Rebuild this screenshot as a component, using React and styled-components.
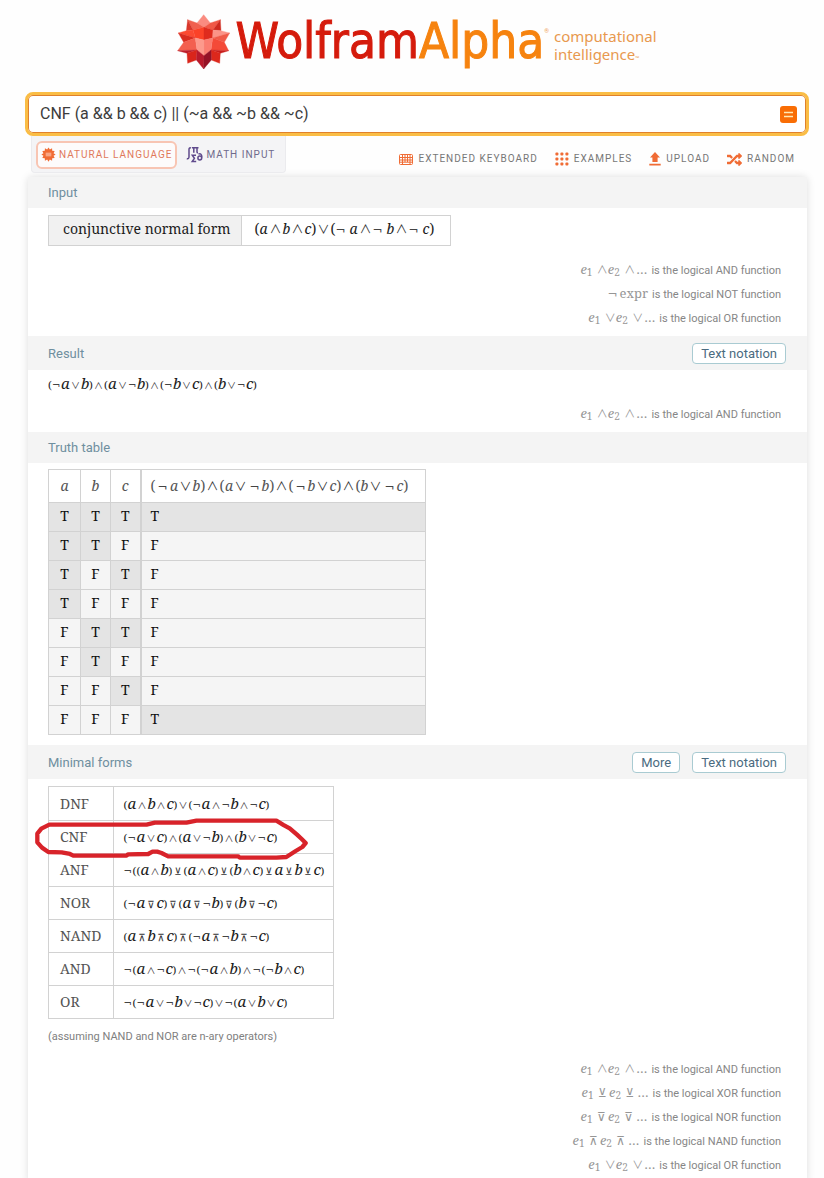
import React from "react";
import styled, { createGlobalStyle, css } from "styled-components";
import { FaRandom } from "react-icons/fa";

const SANS = `Roboto, "Liberation Sans", sans-serif`;
const SERIF = `"Noto Serif", "DejaVu Serif Condensed", "DejaVu Serif", serif`;
const SYMBOL = `"DejaVu Sans", sans-serif`;
const WEDGE = `"Noto Sans CJK SC", "DejaVu Sans", sans-serif`;

const GlobalStyle = createGlobalStyle`
  * { box-sizing: border-box; }
  body {
    margin: 0;
    background: #fefefe;
    color: #333;
    font-family: ${SANS};
    font-size: 13px;
  }
  button { font-family: inherit; cursor: pointer; }
`;

const Page = styled.div`
  padding: 0 17px 0 27px;
  overflow: hidden;
`;

/* ---------- masthead ---------- */

const Masthead = styled.header`
  display: flex;
  justify-content: center;
  align-items: flex-start;
  height: 92px;
  padding-top: 13px;
`;

const HomeLink = styled.a`
  display: flex;
  align-items: center;
  text-decoration: none;
`;

const Spikey = styled.svg`
  width: 54px;
  height: 56px;
  margin-right: 4px;
`;

const Wordmark = styled.span`
  font-family: "DejaVu Sans Condensed", "DejaVu Sans", sans-serif;
  font-size: 49px;
  line-height: 58px;
  color: #d51b0c;
  -webkit-text-stroke: 1px currentColor;
`;

const WordmarkAccent = styled.span`
  color: #f6830f;
`;

const Registered = styled.sup`
  align-self: flex-start;
  font-size: 6px;
  line-height: 8px;
  margin-top: 14px;
  color: #f0a35c;
`;

const Tagline = styled.span`
  margin: 9px 0 0 5px;
  font-family: "Noto Sans", sans-serif;
  font-size: 15px;
  line-height: 18px;
  color: #e8994f;
`;

const Trade = styled.small`
  font-size: 5px;
`;

/* ---------- search ---------- */

const SearchForm = styled.form`
  display: flex;
  align-items: center;
  height: 44px;
  margin: 0 -2px;
  padding: 0 9px 0 12px;
  background: #fff;
  border: 3px solid #fabd45;
  border-radius: 8px;
  box-shadow: inset 0 0 0 1px #e0812c;
`;

const Query = styled.input`
  flex: 1;
  min-width: 0;
  border: 0;
  padding: 0 0 1px;
  outline: 0;
  background: none;
  font: 16px ${SANS};
  color: #3c3c3c;
`;

const Submit = styled.button`
  display: grid;
  place-items: center;
  width: 17px;
  height: 17px;
  padding: 0;
  border: 0;
  border-radius: 3px;
  background: #f96d05;
`;

/* ---------- toolbar ---------- */

const Toolbar = styled.div`
  display: flex;
  justify-content: space-between;
  align-items: flex-start;
  height: 41px;
  padding: 0 12px 0 4px;
`;

const Modes = styled.div`
  display: flex;
  align-items: center;
  height: 37px;
  padding: 1px 4px 0 4px;
  background: #f4f4f6;
  border: 1px solid #ebebee;
  border-top: 0;
  border-radius: 0 0 4px 4px;
`;

const ToolButton = styled.button`
  display: flex;
  align-items: center;
  gap: 5px;
  padding: 0;
  border: 0;
  background: none;
  font-size: 10px;
  line-height: 16px;
  letter-spacing: 1px;
  text-transform: uppercase;
  white-space: nowrap;
  color: #777;
  svg { flex: none; color: #f06c35; }
`;

const ModeButton = styled(ToolButton)`
  height: 28px;
  gap: 3px;
  padding: 0 4px;
  border: 2px solid transparent;
  border-radius: 6px;
  color: #6f6a8c;
  ${(p) =>
    p.$active &&
    css`
      margin-right: 3px;
      padding: 0 3px;
      border-color: #f8c5b3;
      background: #fdfbfb;
      color: #e0795a;
    `}
`;

const Tools = styled.div`
  display: flex;
  gap: 17px;
  padding-top: 15px;
`;

/* ---------- result pods ---------- */

const Card = styled.main`
  margin: 0 0 0 1px;
  background: #fff;
  border-radius: 4px 4px 0 0;
  box-shadow: 0 0 9px rgba(0, 0, 0, 0.13);
`;

const PodHeader = styled.div`
  display: flex;
  align-items: center;
  gap: 12px;
  height: ${(p) => (p.$tall ? 34 : 31)}px;
  padding: 0 21px 0 20px;
  background: #f4f4f4;
`;

const PodTitle = styled.h2`
  flex: 1;
  margin: 0;
  font-size: 13px;
  font-weight: 400;
  color: #6f8f9f;
`;

const PodButton = styled.button`
  height: 21px;
  padding: 0 8px;
  border: 1px solid #a9cbd2;
  border-radius: 4px;
  background: #fff;
  font-size: 13px;
  line-height: 19px;
  color: #4b6b80;
`;

const PodBody = styled.div`
  display: flex;
  flex-direction: column;
  align-items: flex-start;
  padding: 6px 26px 7px 20px;
`;

const Notes = styled.ul`
  align-self: stretch;
  margin: 11px 0 0;
  padding: 0;
  list-style: none;
`;

const Note = styled.li`
  display: flex;
  justify-content: flex-end;
  align-items: baseline;
  gap: 4px;
  height: 24px;
  font-size: 11px;
  line-height: 24px;
  color: #868686;
`;

const Remark = styled.p`
  margin: 10px 0 0;
  font-size: 11px;
  line-height: 16px;
  color: #808080;
`;

/* ---------- formulas ---------- */

const sizes = {
  text: { letter: 14, paren: 14, wedge: 12, sign: 12, pw: 5, nw: 14, ow: 14 },
  small: { letter: 15, paren: 11, wedge: 9, sign: 10, pw: 4, nw: 9, ow: 11 },
};

const Math = styled.span`
  display: inline-flex;
  align-items: baseline;
  height: 14px;
  font-family: ${SERIF};
  line-height: 14px;
  color: ${(p) => (p.$muted ? "#555" : "#1c1c1c")};
`;

const Letter = styled.i`
  width: ${(p) => ({ a: 9, b: 8, c: 7 })[p.children]}px;
  font-size: ${(p) => sizes[p.$size].letter}px;
`;

const Paren = styled.span`
  width: ${(p) => sizes[p.$size].pw}px;
  font-size: ${(p) => sizes[p.$size].paren}px;
`;

const Not = styled.span`
  width: ${(p) => sizes[p.$size].nw}px;
  font-family: ${SYMBOL};
  font-size: ${(p) => sizes[p.$size].sign}px;
  color: #444;
`;

const Sign = styled.span`
  display: flex;
  justify-content: center;
  width: ${(p) => sizes[p.$size].ow}px;
  font-family: ${(p) => (p.$wedge ? WEDGE : SYMBOL)};
  font-size: ${(p) => (p.$wedge ? sizes[p.$size].wedge : sizes[p.$size].sign)}px;
  color: #333;
`;

const isWedge = (ch) => ch === "∧" || ch === "∨";

function Formula({ children, size = "small", muted }) {
  return (
    <Math $muted={muted}>
      {[...children].map((ch, i) => {
        if ("abc".includes(ch)) return <Letter key={i} $size={size}>{ch}</Letter>;
        if ("()".includes(ch)) return <Paren key={i} $size={size}>{ch}</Paren>;
        if (ch === "¬") return <Not key={i} $size={size}>{ch}</Not>;
        return <Sign key={i} $size={size} $wedge={isWedge(ch)}>{ch}</Sign>;
      })}
    </Math>
  );
}

const Pattern = styled.span`
  display: inline-flex;
  align-items: baseline;
  font-family: ${SERIF};
  font-size: 13px;
  color: #969696;
`;

const Sub = styled.sub`
  width: 10px;
  font-size: 10px;
  line-height: 10px;
  vertical-align: baseline;
  position: relative;
  top: 2px;
`;

const PatternSign = styled.span`
  width: ${(p) => (p.$wide ? 12 : 11)}px;
  font-family: ${(p) => (p.$wedge ? WEDGE : SYMBOL)};
  font-size: ${(p) => (p.$wedge ? 11 : 12)}px;
`;

function Definition({ op, name }) {
  return (
    <Note>
      {op === "¬" ? (
        <Pattern>
          <PatternSign $wide>¬</PatternSign>expr
        </Pattern>
      ) : (
        <Pattern>
          <i>e</i><Sub>1</Sub><PatternSign $wedge={isWedge(op)}>{op}</PatternSign>
          <i>e</i><Sub>2</Sub><PatternSign $wide $wedge={isWedge(op)}>{op}</PatternSign>…
        </Pattern>
      )}
      <span>is the logical {name} function</span>
    </Note>
  );
}

/* ---------- tables ---------- */

const Grid = styled.table`
  border-collapse: collapse;
  font-family: ${SERIF};
  font-size: 14px;
  line-height: 16px;
  th, td {
    border: 1px solid #d2d2d2;
    padding: 0;
    font-weight: 400;
    text-align: left;
  }
`;

const InputGrid = styled(Grid)`
  margin-top: 1px;
  color: #1c1c1c;
  tr { height: 30px; }
  th { padding: 0 10px 4px 14px; background: #f1f1f1; }
  td { padding: 0 15px 4px 13px; }
`;

const TruthGrid = styled(Grid)`
  margin-bottom: 3px;
  tr { height: 29px; }
  thead tr { height: 33px; }
  thead th { width: 30px; text-align: center; color: #555; }
  thead th:first-child { width: 32px; }
  thead th:last-child {
    width: auto;
    padding: 0 16px 0 9px;
    border-left-width: 2px;
  }
`;

const TruthCell = styled.td`
  && {
    padding: 0 0 3px;
    text-align: center;
    color: #111;
    background: ${(p) => (p.$on ? "#e4e4e4" : "#f5f5f5")};
  }
  &&:last-child {
    padding-left: 9px;
    text-align: left;
    border-left-width: 2px;
  }
`;

const FormsWrap = styled.div`
  position: relative;
  margin-top: 1px;
`;

const FormsGrid = styled(Grid)`
  tr { height: 33px; }
  tr:first-child { height: 34px; }
  th { padding: 0 12px 0 11px; color: #555; }
  td { padding: 0 9px; }
`;

const Scribble = styled.svg`
  position: absolute;
  left: -13px;
  top: 32px;
  width: 273px;
  height: 42px;
  pointer-events: none;
`;

/* ---------- drawings ---------- */

const FACES = [
  ["130,42 150,67 131,80 110,67", "#fa8b80"],
  ["180,57 150,67 131,80 158,88", "#f05846"],
  ["180,57 158,88 182,90", "#cf2a1f"],
  ["82,57 110,67 131,80 98,88", "#f0604f"],
  ["82,57 98,88 78,90", "#d9372b"],
  ["131,80 98,88 105,112 131,118", "#fb4228"],
  ["131,80 158,88 157,112 131,118", "#df2b1e"],
  ["54,97 78,90 98,88 105,112", "#fb4a32"],
  ["54,97 105,112 70,125", "#d92c20"],
  ["208,97 182,90 158,88 157,112", "#fb9388"],
  ["208,97 157,112 192,125", "#f05a49"],
  ["52,150 70,125 105,112 110,148", "#f3604f"],
  ["52,150 110,148 80,158", "#bd1d2b"],
  ["205,150 192,125 157,112 152,148", "#f44a38"],
  ["205,150 152,148 180,158", "#c81d1b"],
  ["131,118 157,112 152,148 131,165", "#fb7d70"],
  ["131,118 105,112 110,148 131,165", "#fd9a8c"],
  ["82,188 80,158 110,148 108,178", "#d9251b"],
  ["178,188 180,158 152,148 153,178", "#dc281c"],
  ["130,205 108,178 110,148 131,165", "#b81a2c"],
  ["130,205 153,178 152,148 131,165", "#951226"],
];

const burst = Array.from({ length: 24 }, (_, i) => {
  const r = i % 2 ? 5.6 : 7.6;
  const t = (i * globalThis.Math.PI) / 12;
  return `${(8 + r * globalThis.Math.cos(t)).toFixed(2)},${(8 + r * globalThis.Math.sin(t)).toFixed(2)}`;
}).join(" ");

const BurstIcon = () => (
  <svg width="15" height="15" viewBox="0 0 16 16" fill="currentColor">
    <polygon points={burst} />
    <rect x="5" y="6" width="6" height="4" fill="#f8a583" />
  </svg>
);

const MathIcon = () => (
  <svg width="17" height="17" viewBox="0 0 17 17" fill="none" stroke="#5f4a8c" strokeWidth="1.5">
    <path d="M5 2.2C3.6 1.4 3 2.2 3 3.6v7.2c0 1.600-.8 2.400-2.200 1.700" />
    <path d="M6 1.800h6.500M7.800 1.800v5M11 1.800v4.200q0 .8 1 .8" />
    <path d="M10 9.300H6.300L8.400 12.300 6.200 15.500H10.200" />
    <path d="M12.400 8.200C14.400 7 16 8.400 15.800 11.400" />
    <circle cx="13.800" cy="12" r="1.900" />
  </svg>
);

const KeyboardIcon = () => (
  <svg width="14" height="11" viewBox="0 0 14 11" fill="none" stroke="currentColor">
    <rect x=".5" y=".5" width="13" height="10" rx="1" />
    <path d="M1 3.5h12M1 6h12M1 8.2h12M3.5 1v9M6 1v7M8.5 1v7M11 1v9" />
  </svg>
);

const DotsIcon = () => (
  <svg width="14" height="14" viewBox="0 0 14 14" fill="currentColor">
    {[0, 5, 10].map((y) =>
      [0, 5, 10].map((x) => <rect key={`${x}-${y}`} x={x + 0.4} y={y + 0.4} width="3" height="3" rx="1" />)
    )}
  </svg>
);

const UploadIcon = () => (
  <svg width="12" height="14" viewBox="0 0 12 14" fill="currentColor">
    <path d="M6 0l5 5.4H8.6V10H3.4V5.4H1zM.3 11.8h11.4v1.700H.3z" />
  </svg>
);

const EqualsIcon = () => (
  <svg width="9" height="7" viewBox="0 0 9 7" stroke="#ffe9b5" strokeWidth="1.6">
    <path d="M0 1.5h9M0 5.5h9" />
  </svg>
);

/* ---------- content ---------- */

const T = true;
const F = false;
const truthRows = [
  [T, T, T, T], [T, T, F, F], [T, F, T, F], [T, F, F, F],
  [F, T, T, F], [F, T, F, F], [F, F, T, F], [F, F, F, T],
];

const forms = [
  ["DNF", "(a∧b∧c)∨(¬a∧¬b∧¬c)"],
  ["CNF", "(¬a∨c)∧(a∨¬b)∧(b∨¬c)"],
  ["ANF", "¬((a∧b)⊻(a∧c)⊻(b∧c)⊻a⊻b⊻c)"],
  ["NOR", "(¬a⊽c)⊽(a⊽¬b)⊽(b⊽¬c)"],
  ["NAND", "(a⊼b⊼c)⊼(¬a⊼¬b⊼¬c)"],
  ["AND", "¬(a∧¬c)∧¬(¬a∧b)∧¬(¬b∧c)"],
  ["OR", "¬(¬a∨¬b∨¬c)∨¬(a∨b∨c)"],
];

function Pod({ title, actions = [], children }) {
  return (
    <section>
      <PodHeader $tall={actions.length > 0}>
        <PodTitle>{title}</PodTitle>
        {actions.map((a) => <PodButton key={a} type="button">{a}</PodButton>)}
      </PodHeader>
      <PodBody>{children}</PodBody>
    </section>
  );
}

export default function App() {
  return (
    <Page>
      <GlobalStyle />
      <Masthead>
        <HomeLink href="/">
          <Spikey viewBox="50 40 162 168" aria-hidden="true">
            {FACES.map(([points, fill]) => (
              <polygon key={points} points={points} fill={fill} stroke={fill} strokeWidth="1" />
            ))}
          </Spikey>
          <Wordmark>Wolfram<WordmarkAccent>Alpha</WordmarkAccent></Wordmark>
          <Registered>®</Registered>
          <Tagline>computational<br />intelligence<Trade>™</Trade></Tagline>
        </HomeLink>
      </Masthead>

      <SearchForm onSubmit={(e) => e.preventDefault()}>
        <Query aria-label="Query" defaultValue="CNF (a && b && c) || (~a && ~b && ~c)" />
        <Submit type="submit" aria-label="Compute"><EqualsIcon /></Submit>
      </SearchForm>

      <Toolbar>
        <Modes>
          <ModeButton type="button" $active><BurstIcon />Natural Language</ModeButton>
          <ModeButton type="button"><MathIcon />Math Input</ModeButton>
        </Modes>
        <Tools>
          <ToolButton type="button"><KeyboardIcon />Extended Keyboard</ToolButton>
          <ToolButton type="button"><DotsIcon />Examples</ToolButton>
          <ToolButton type="button"><UploadIcon />Upload</ToolButton>
          <ToolButton type="button"><FaRandom size={15} />Random</ToolButton>
        </Tools>
      </Toolbar>

      <Card>
        <Pod title="Input">
          <InputGrid>
            <tbody>
              <tr>
                <th scope="row">conjunctive normal form</th>
                <td><Formula size="text">(a∧b∧c)∨(¬a∧¬b∧¬c)</Formula></td>
              </tr>
            </tbody>
          </InputGrid>
          <Notes>
            <Definition op="∧" name="AND" />
            <Definition op="¬" name="NOT" />
            <Definition op="∨" name="OR" />
          </Notes>
        </Pod>

        <Pod title="Result" actions={["Text notation"]}>
          <Formula>(¬a∨b)∧(a∨¬b)∧(¬b∨c)∧(b∨¬c)</Formula>
          <Notes>
            <Definition op="∧" name="AND" />
          </Notes>
        </Pod>

        <Pod title="Truth table">
          <TruthGrid>
            <thead>
              <tr>
                <th scope="col"><i>a</i></th>
                <th scope="col"><i>b</i></th>
                <th scope="col"><i>c</i></th>
                <th scope="col">
                  <Formula size="text" muted>(¬a∨b)∧(a∨¬b)∧(¬b∨c)∧(b∨¬c)</Formula>
                </th>
              </tr>
            </thead>
            <tbody>
              {truthRows.map((row, r) => (
                <tr key={r}>
                  {row.map((on, c) => <TruthCell key={c} $on={on}>{on ? "T" : "F"}</TruthCell>)}
                </tr>
              ))}
            </tbody>
          </TruthGrid>
        </Pod>

        <Pod title="Minimal forms" actions={["More", "Text notation"]}>
          <FormsWrap>
            <FormsGrid>
              <tbody>
                {forms.map(([name, formula]) => (
                  <tr key={name}>
                    <th scope="row">{name}</th>
                    <td><Formula>{formula}</Formula></td>
                  </tr>
                ))}
              </tbody>
            </FormsGrid>
            <Scribble viewBox="45 235 820 126" fill="none" stroke="#d8232a" strokeWidth="13" strokeLinejoin="round" aria-hidden="true">
              <path d="M88 255H380L405 249H500L530 243H770L792 256L810 266L832 285L846 298L858 310L848 322L828 334L800 352L770 354H660L655 350H445L425 340L412 336H398L385 343L325 344L320 348H160L150 343L125 338L85 337L66 324L52 308V282L64 267Z" />
            </Scribble>
          </FormsWrap>
          <Remark>(assuming NAND and NOR are n-ary operators)</Remark>
          <Notes>
            <Definition op="∧" name="AND" />
            <Definition op="⊻" name="XOR" />
            <Definition op="⊽" name="NOR" />
            <Definition op="⊼" name="NAND" />
            <Definition op="∨" name="OR" />
          </Notes>
        </Pod>
      </Card>
    </Page>
  );
}
